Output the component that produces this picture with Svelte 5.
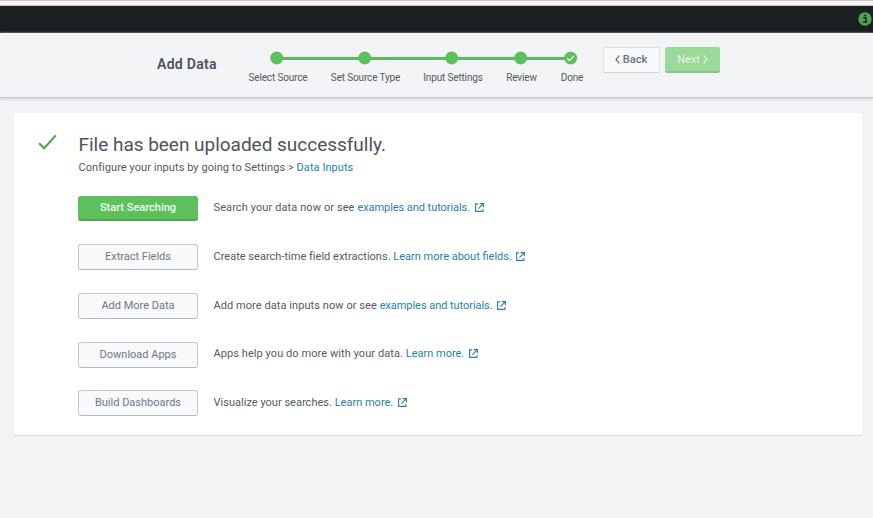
<script>
  const steps = [
    { label: 'Select Source', width: 58, gap: 87 },
    { label: 'Set Source Type', width: 69, gap: 87 },
    { label: 'Input Settings', width: 58, gap: 69 },
    { label: 'Review', width: 31, gap: 50 },
    { label: 'Done', width: 22, gap: 0, done: true }
  ];
  const actions = [
    { button: 'Start Searching', text: 'Search your data now or see', link: 'examples and tutorials.', primary: true, track: 0.1, linkTrack: -0.06 },
    { button: 'Extract Fields', text: 'Create search-time field extractions.', link: 'Learn more about fields.', track: 0.015, linkTrack: 0 },
    { button: 'Add More Data', text: 'Add more data inputs now or see', link: 'examples and tutorials.', track: 0.065, linkTrack: -0.05 },
    { button: 'Download Apps', text: 'Apps help you do more with your data.', link: 'Learn more.', track: 0.07, linkTrack: 0 },
    { button: 'Build Dashboards', text: 'Visualize your searches.', link: 'Learn more.', track: 0.02, linkTrack: 0 }
  ];
</script>

<div class="page">
  <div class="chrome"></div>
  <nav class="topbar">
    <svg width="14" height="14" viewBox="0 0 14 14">
      <circle cx="7" cy="7" r="6.7" fill="#53a051" />
      <path d="M5.2 5.7h2.7v4M5 10.1h4.3" fill="none" stroke="#1a2a22" stroke-width="1.5" />
      <circle cx="7.1" cy="3.5" r="1" fill="#1a2a22" />
    </svg>
  </nav>

  <header>
    <h1>Add Data</h1>
    <ol class="steps">
      {#each steps as step}
        <li style="width: {step.width}px">
          <span class="track">
            {#if step.gap}<i style="width: {step.gap}px"></i>{/if}
            <svg width="14" height="14" viewBox="0 0 14 14">
              <circle cx="6.7" cy="7" r="6.5" fill="#5cc05c" />
              {#if step.done}
                <path d="M3.3 7.5l2.1 2.1 4.5-4.8" fill="none" stroke="#fff" stroke-width="1.2" />
              {/if}
            </svg>
          </span>
          <span class="label">{step.label}</span>
        </li>
      {/each}
    </ol>
    <div class="nav-buttons">
      <button class="back">
        <svg width="5" height="9" viewBox="0 0 5 9"><path d="M4.3 .7L1 4.5l3.3 3.8" /></svg>
        <span>Back</span>
      </button>
      <button class="next">
        <span>Next</span>
        <svg width="5" height="9" viewBox="0 0 5 9"><path d="M.7 .7L4 4.5.7 8.3" /></svg>
      </button>
    </div>
  </header>

  <main>
    <svg class="check" width="20" height="18" viewBox="0 0 20 18">
      <path d="M1 9.2l5.2 5.1L17.8 1.4" fill="none" stroke="#4fa34f" stroke-width="2.1" />
    </svg>
    <div class="content">
      <h2>File has been uploaded successfully.</h2>
      <p class="sub">Configure your inputs by going to Settings &gt; <a href="#inputs">Data Inputs</a></p>
      <div class="actions">
        {#each actions as action}
          <div class="row">
            <button class:primary={action.primary}>{action.button}</button>
            <p style="letter-spacing: {action.track}px">{action.text} <a href="#more" style="letter-spacing: {action.linkTrack}px">{action.link}</a></p>
            <svg width="9" height="9" viewBox="0 0 9 9" fill="none" stroke="#2f7fa8" stroke-width="1.1">
              <path d="M3 .9H.6v7.5h7.3V6M4.6 .6h3.8v3.6M8.2 .8L3.4 5.6" />
            </svg>
          </div>
        {/each}
      </div>
    </div>
  </main>
</div>

<style>
  :global(body) {
    margin: 0;
    background: #f2f4f5;
  }
  .page {
    height: 518px;
    overflow: hidden;
    background: #f2f4f5;
    color: #555a61;
    font-family: Roboto, 'Liberation Sans', sans-serif;
    font-size: 11px;
  }
  h1, h2, p, ol { margin: 0; padding: 0; }
  svg { display: block; flex: none; }
  a { color: #2a7fa8; text-decoration: none; }
  button {
    box-sizing: border-box;
    padding: 0;
    font: inherit;
    border-radius: 2px;
    white-space: nowrap;
  }
  .chrome {
    box-sizing: border-box;
    height: 6px;
    background: #f7f4f3;
    border-top: 1px solid #c9c3c3;
    border-bottom: 1px solid #c5cac6;
  }
  .topbar {
    box-sizing: border-box;
    height: 27px;
    padding: 6px 1px 0 0;
    display: flex;
    justify-content: flex-end;
    background: #1a1f22;
    border-bottom: 1px solid #34383c;
  }
  header {
    box-sizing: border-box;
    height: 65px;
    padding-left: 157px;
    display: flex;
    align-items: flex-start;
    border-bottom: 1px solid #c5cad2;
    box-shadow: 0 1px 3px #c9ced8;
  }
  h1 {
    width: 91px;
    padding-top: 23px;
    font-size: 14px;
    letter-spacing: 0.3px;
    line-height: 17px;
    font-weight: 600;
    color: #4b525d;
    white-space: nowrap;
  }
  .steps {
    width: 355px;
    display: flex;
    gap: 24px;
    padding-top: 18px;
    list-style: none;
  }
  li {
    flex: none;
    display: flex;
    flex-direction: column;
    align-items: center;
  }
  .track { position: relative; }
  .track svg { position: relative; z-index: 1; }
  .track i {
    position: absolute;
    left: 7px;
    top: 6px;
    height: 3px;
    background: #62b862;
  }
  .label {
    margin: 6px -2px 0 0;
    font-size: 10px;
    line-height: 14px;
    letter-spacing: -0.15px;
    white-space: nowrap;
  }
  .nav-buttons {
    display: flex;
    gap: 5px;
    padding-top: 14px;
  }
  .nav-buttons button {
    height: 26px;
    display: flex;
    align-items: center;
    justify-content: center;
    gap: 3px;
    font-weight: 500;
  }
  .nav-buttons path { fill: none; stroke: currentColor; stroke-width: 1.2; }
  .nav-buttons .back {
    width: 57px;
    height: 26px;
    padding: 0 1px 1px 0;
    background: #f7f9fa;
    border: 1px solid #dfe2e6;
    border-bottom-color: #d0d4d9;
    color: #68717c;
  }
  .nav-buttons .next {
    width: 55px;
    background: #9bd99b;
    border: 0;
    border-bottom: 2px solid #8cc48c;
    color: #e2f6e2;
    font-weight: 400;
  }
  main {
    box-sizing: border-box;
    width: 848px;
    height: 322px;
    margin: 15px 0 0 14px;
    padding: 20px 0 0 24px;
    display: flex;
    align-items: flex-start;
    background: #fff;
    box-shadow: 0 1px 1px #d9dce0;
  }
  .check { margin-top: 1px; }
  .content { margin-left: 20px; }
  h2 {
    margin-left: 0.5px;
    font-size: 19px;
    line-height: 24px;
    letter-spacing: -0.02px;
    font-weight: 400;
    color: #4d535b;
    white-space: nowrap;
  }
  .sub {
    margin-left: 0.5px;
    padding-top: 3px;
    line-height: 15px;
    letter-spacing: 0.06px;
    white-space: nowrap;
  }
  .actions {
    margin-top: 20px;
    display: flex;
    flex-direction: column;
    gap: 23px;
  }
  .row {
    height: 26px;
    display: flex;
    align-items: center;
  }
  .row:last-child { margin-top: -1px; }
  .row p { line-height: 15px; margin: -1px 4.5px 0 15.5px; white-space: nowrap; }
  .row svg { margin-top: -1px; }
  .row:nth-child(4) p, .row:nth-child(4) svg { margin-top: -3px; }
  .row button {
    width: 120px;
    height: 26px;
    padding-bottom: 2px;
    background: #f7f9fa;
    border: 1px solid #c3c9cf;
    border-bottom-color: #b3b9bf;
    color: #6f7884;
    border-radius: 3px;
  }
  .row button.primary {
    height: 25px;
    margin-top: 1px;
    padding-bottom: 0;
    background: #5cc05c;
    border: 0;
    border-bottom: 2px solid #4fa550;
    color: #f0fbf0;
    font-weight: 500;
  }
</style>
